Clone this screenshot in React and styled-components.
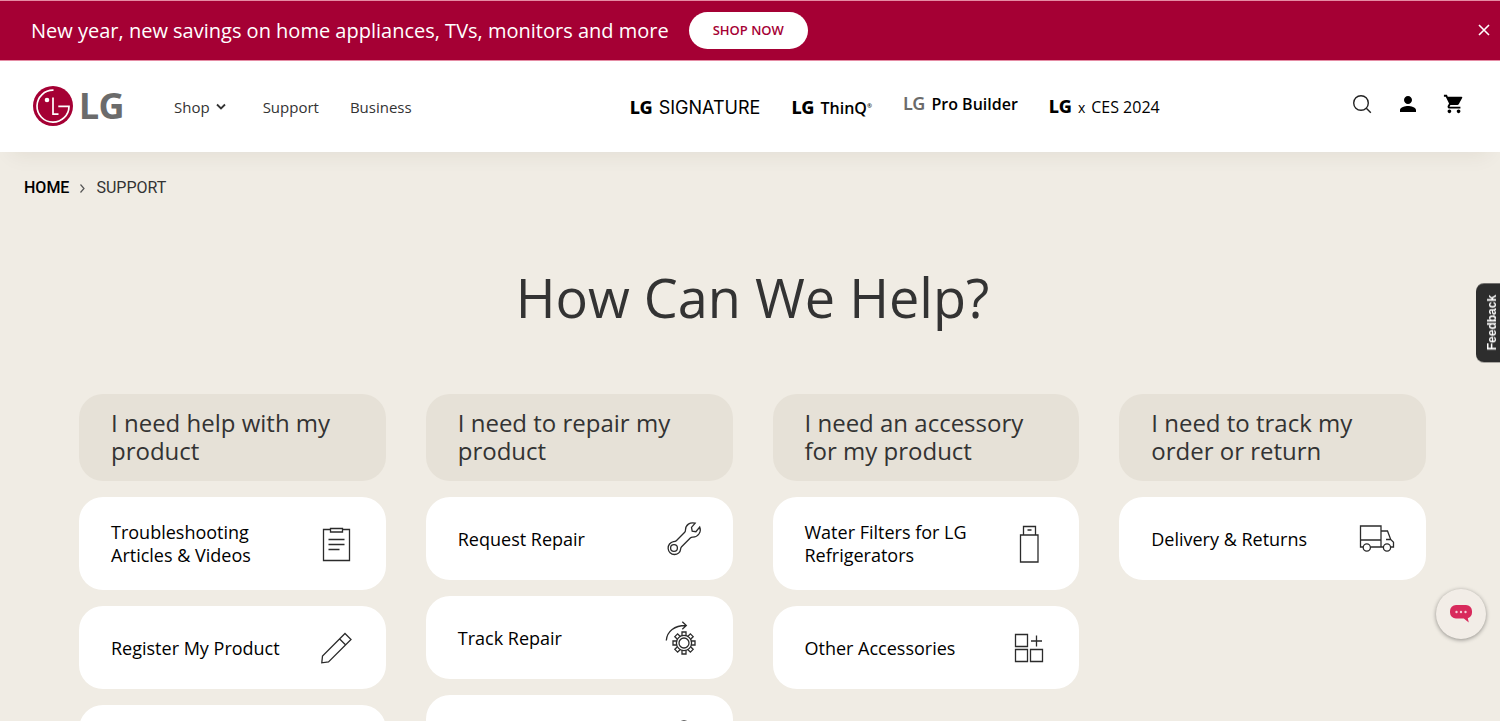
import React from "react";
import styled, { createGlobalStyle } from "styled-components";
import { MdPerson, MdShoppingCart } from "react-icons/md";

const GlobalStyle = createGlobalStyle`
  *, *::before, *::after { box-sizing: border-box; }
  body {
    margin: 0;
    background: #f0ece4;
    color: #333;
    font-family: "Open Sans", "Noto Sans", sans-serif;
  }
  a { color: inherit; text-decoration: none; }
  button { font-family: inherit; cursor: pointer; }
`;

const Banner = styled.aside`
  display: flex;
  align-items: center;
  gap: 20px;
  height: 61px;
  padding: 0 8px 0 31px;
  background: #a50034;
  border-top: 1px solid #e58ca4;
  border-bottom: 1px solid #e58ca4;
  color: #fff;
`;

const BannerText = styled.p`
  margin: 0;
  font-size: 20px;
  line-height: 28px;
  white-space: nowrap;
`;

const PillLink = styled.a`
  padding: 0 24px;
  border-radius: 19px;
  background: #fff;
  color: #a50034;
  font-size: 13px;
  font-weight: 600;
  line-height: 37px;
  white-space: nowrap;
`;

const CloseButton = styled.button`
  display: flex;
  margin-left: auto;
  padding: 0;
  border: 0;
  background: none;
  color: #fff;
`;

const Header = styled.header`
  position: relative;
  display: flex;
  align-items: center;
  height: 91px;
  padding: 0 34px 1px 33px;
  background: #fff;
  box-shadow: 0 14px 20px -12px rgba(60, 50, 30, 0.08);
`;

const Logo = styled.a`
  display: flex;
  align-items: center;
  gap: 6px;
  width: 141px;
  color: #6b6b6b;
  font-family: "Noto Sans", sans-serif;
  font-size: 36px;
  font-weight: 700;
  line-height: 40px;
`;

const Nav = styled.nav`
  display: flex;
  gap: 31px;
  padding-top: 2px;
  font-size: 15px;
  line-height: 24px;
`;

const NavItem = styled.a`
  display: flex;
  align-items: center;
  gap: 6px;
  margin-right: ${(p) => (p.$menu ? "6px" : "0")};
`;

const Brands = styled.nav`
  display: flex;
  gap: 31px;
  margin: 0 auto 0 218px;
  padding-top: 2px;
  color: #000;
`;

const Brand = styled.a`
  display: flex;
  align-items: baseline;
  align-self: center;
  gap: 6px;
  padding-bottom: ${(p) => (p.$raised ? "8px" : "0")};
  font-family: ${(p) => p.$font || "inherit"};
  font-size: ${(p) => p.$size || 16}px;
  font-weight: ${(p) => p.$weight || 400};
  line-height: 24px;
  white-space: nowrap;
`;

const BrandMark = styled.b`
  color: ${(p) => (p.$muted ? "#6b6b6b" : "#000")};
  font-family: "Noto Sans", sans-serif;
  font-size: 18px;
  font-weight: ${(p) => (p.$muted ? 600 : 800)};
`;

const Registered = styled.sup`
  font-size: 6px;
  line-height: 8px;
  vertical-align: 6px;
`;

const Times = styled.span`
  font-size: 14px;
  font-weight: 400;
`;

const Tools = styled.div`
  display: flex;
  align-items: center;
  gap: 22px;
  padding-bottom: 4px;
`;

const ToolButton = styled.button`
  display: flex;
  align-items: center;
  justify-content: center;
  width: 24px;
  height: 28px;
  padding: 0;
  border: 0;
  background: none;
  color: #000;
`;

const Breadcrumb = styled.nav`
  display: flex;
  align-items: center;
  gap: 10px;
  padding: 24px 24px 0;
  font-family: Roboto, sans-serif;
  font-size: 16px;
  line-height: 24px;
`;

const HomeLink = styled.a`
  font-weight: 500;
  && { color: #000; }
`;

const Title = styled.h1`
  margin: 61px 0 60px;
  padding-left: 5px;
  font-size: 54px;
  font-weight: 400;
  line-height: 73px;
  text-align: center;
`;

const Columns = styled.div`
  display: grid;
  grid-template-columns: repeat(4, 1fr);
  align-items: start;
  gap: 40px;
  padding: 0 74px 40px 79px;
`;

const Column = styled.section`
  display: grid;
  gap: 16px;
`;

const Topic = styled.h2`
  margin: 0;
  padding: 15px 32px 16px;
  border-radius: 24px;
  background: #e6e1d7;
  font-size: 24px;
  font-weight: 400;
  line-height: 28px;
`;

const Card = styled.a`
  display: flex;
  align-items: center;
  justify-content: space-between;
  min-height: 83px;
  padding: 24px 29px 23px 32px;
  border-radius: 24px;
  background: #fff;
  font-size: 18px;
  line-height: 23px;
  && { color: #000; }
`;

const CardText = styled.span`
  max-width: 184px;
`;

const CardIcon = styled.svg`
  flex: none;
  width: 40px;
  height: 40px;
  margin: -10px 0 -10px auto;
  fill: none;
  stroke: #2b2b2b;
  stroke-width: 1.3;
`;

const Feedback = styled.button`
  position: fixed;
  top: 283px;
  right: 0;
  width: 24px;
  padding: 12px 8px 12px 0;
  border: 0;
  border-radius: 0 8px 8px 0;
  background: #2d2d2d;
  color: #fff;
  font-family: "Liberation Sans", sans-serif;
  font-size: 12px;
  font-weight: 700;
  line-height: 16px;
  writing-mode: vertical-rl;
  transform: rotate(180deg);
`;

const Chat = styled.button`
  position: fixed;
  right: 14px;
  bottom: 82px;
  display: flex;
  align-items: center;
  justify-content: center;
  width: 50px;
  height: 50px;
  padding: 0;
  border: 0;
  border-radius: 50%;
  background: #f2ede7;
  box-shadow: 0 1px 4px rgba(0, 0, 0, 0.4);
`;

const teeth = [0, 45, 90, 135, 180, 225, 270, 315];

const icons = {
  clipboard: (
    <>
      <path d="M13.5 5.5h-7v31h26v-31h-7" />
      <path d="M13.5 4.5h12v3.5h-12zM11.5 15.5h16M11.5 20.5h16M11.5 25.5h11" />
    </>
  ),
  pencil: <path d="M28 5.5l6 6L11.5 34l-6.7.8.7-6.8zM22.7 11l6 6" />,
  wrench: (
    <>
      <circle cx="10" cy="29" r="3.4" />
      <path d="M9.5 22.6c1.3-.1 2.1-.2 2.8-.9l8.4-8.5c.7-.7.8-1.3.8-2.4C21.5 6 26 2.7 31.2 4.2L27.5 8.400l.7 3.700 3.700.6 3.800-4.700c2 5-1.700 10.300-7.100 10.100-1.100 0-1.600.2-2.300.9l-8.700 8.700c-.8.8-.9 1.300-1 2.400-.3 3.300-3 5.400-6.200 5.400a6.500 6.500 0 0 1-.9-12.900z" />
    </>
  ),
  track: (
    <>
      <circle cx="20" cy="25" r="5" />
      <circle cx="20" cy="25" r="7.6" />
      {teeth.map((a) => (
        <path key={a} d="M18 17.7v-3.7h4v3.7" transform={`rotate(${a} 20 25)`} />
      ))}
      <path d="M2.3 22.5C3 13.5 10.5 7.3 22 7.5M18.3 3.8l4 3.7-4 3.7" />
    </>
  ),
  agent: (
    <>
      <circle cx="20" cy="10" r="6" />
      <path d="M6 36c0-9 6-14 14-14s14 5 14 14z" />
    </>
  ),
  filter: <path d="M10.5 11h17.5v27h-17.5zM13.5 11v-8.5h12v8.5M17.5 6h4" />,
  grid: (
    <path d="M5.5 6.5h12v12h-12zM5.5 21.5h12v12h-12zM20.5 21.5h12v12h-12zM26.5 7.5v11M21 13h11" />
  ),
  truck: (
    <>
      <path d="M6 28H3.5V7H24v21H13.5M3.5 21H24M24 12h6.5l3.2 8.5 2.8 2.7V28h-2.8M26.2 28H24M29 20.5h4.7" />
      <circle cx="9.8" cy="28.5" r="3.6" />
      <circle cx="30" cy="28.5" r="3.6" />
    </>
  ),
};

const columns = [
  {
    topic: "I need help with my product",
    cards: [
      ["Troubleshooting Articles & Videos", "clipboard"],
      ["Register My Product", "pencil"],
      [null, null],
    ],
  },
  {
    topic: "I need to repair my product",
    cards: [
      ["Request Repair", "wrench"],
      ["Track Repair", "track"],
      [null, "agent"],
    ],
  },
  {
    topic: "I need an accessory for my product",
    cards: [
      ["Water Filters for LG Refrigerators", "filter"],
      ["Other Accessories", "grid"],
    ],
  },
  {
    topic: "I need to track my order or return",
    cards: [["Delivery & Returns", "truck"]],
  },
];

function LogoMark() {
  return (
    <svg width="40" height="40" viewBox="0 0 40 40" fill="none" stroke="#fff" strokeWidth="1.7">
      <circle cx="20" cy="20" r="20" fill="#a50034" stroke="none" />
      <path d="M20.5 4.2A16 16 0 1 0 36 20.4H25.3" />
      <path d="M20 11.5V28.2H25.5" />
      <circle cx="14" cy="14" r="2.3" fill="#fff" stroke="none" />
    </svg>
  );
}

export default function App() {
  return (
    <>
      <GlobalStyle />
      <Banner>
        <BannerText>New year, new savings on home appliances, TVs, monitors and more</BannerText>
        <PillLink href="#shop">SHOP NOW</PillLink>
        <CloseButton aria-label="Close">
          <svg width="16" height="16" viewBox="0 0 16 16" stroke="currentColor" strokeWidth="1.6">
            <path d="M3 2l10 10M13 2L3 12" />
          </svg>
        </CloseButton>
      </Banner>

      <Header>
        <Logo href="#home">
          <LogoMark />
          LG
        </Logo>
        <Nav>
          <NavItem href="#menu" $menu>
            Shop
            <svg width="10" height="8" viewBox="0 0 10 8" fill="none" stroke="currentColor" strokeWidth="1.8">
              <path d="M1 1.5l4 4 4-4" />
            </svg>
          </NavItem>
          <NavItem href="#support">Support</NavItem>
          <NavItem href="#business">Business</NavItem>
        </Nav>
        <Brands>
          <Brand href="#signature" $font="Inter, sans-serif" $size={18}>
            <BrandMark>LG</BrandMark>
            SIGNATURE
          </Brand>
          <Brand href="#thinq" $weight={600}>
            <BrandMark>LG</BrandMark>
            <span>
              ThinQ<Registered>®</Registered>
            </span>
          </Brand>
          <Brand href="#builder" $weight={600} $raised>
            <BrandMark $muted>LG</BrandMark>
            Pro Builder
          </Brand>
          <Brand href="#ces" $weight={500}>
            <BrandMark>LG</BrandMark>
            <Times>x</Times>
            CES 2024
          </Brand>
        </Brands>
        <Tools>
          <ToolButton aria-label="Search">
            <svg width="20" height="20" viewBox="0 0 20 20" fill="none" stroke="#222" strokeWidth="1.4">
              <circle cx="9" cy="9" r="7.3" />
              <path d="M14.3 14.3l4.5 4.5" />
            </svg>
          </ToolButton>
          <ToolButton aria-label="Account">
            <MdPerson size={28} />
          </ToolButton>
          <ToolButton aria-label="Cart">
            <MdShoppingCart size={22} />
          </ToolButton>
        </Tools>
      </Header>

      <main>
        <Breadcrumb aria-label="Breadcrumb">
          <HomeLink href="#home">HOME</HomeLink>
          <svg width="7" height="10" viewBox="0 0 7 10" fill="none" stroke="#555" strokeWidth="1.2">
            <path d="M1.5 1.5L5 5.5 1.5 9.5" />
          </svg>
          <span>SUPPORT</span>
        </Breadcrumb>
        <Title>How Can We Help?</Title>
        <Columns>
          {columns.map(({ topic, cards }) => (
            <Column key={topic}>
              <Topic>{topic}</Topic>
              {cards.map(([label, icon], i) => (
                <Card key={i} href="#topic">
                  {label && <CardText>{label}</CardText>}
                  {icon && <CardIcon viewBox="0 0 40 40">{icons[icon]}</CardIcon>}
                </Card>
              ))}
            </Column>
          ))}
        </Columns>
      </main>

      <Feedback>Feedback</Feedback>
      <Chat aria-label="Chat">
        <svg width="24" height="20" viewBox="0 0 24 20">
          <path
            fill="#d82a5c"
            d="M7 1h10a6 6 0 0 1 6 6v1.500a6 6 0 0 1-4.200 5.700l1 4.300-5-4H7a6 6 0 0 1-6-6V7a6 6 0 0 1 6-6z"
          />
          <g fill="#f7cdd9">
            <circle cx="7.5" cy="8" r="1.2" />
            <circle cx="12" cy="8" r="1.2" />
            <circle cx="16.5" cy="8" r="1.2" />
          </g>
        </svg>
      </Chat>
    </>
  );
}
